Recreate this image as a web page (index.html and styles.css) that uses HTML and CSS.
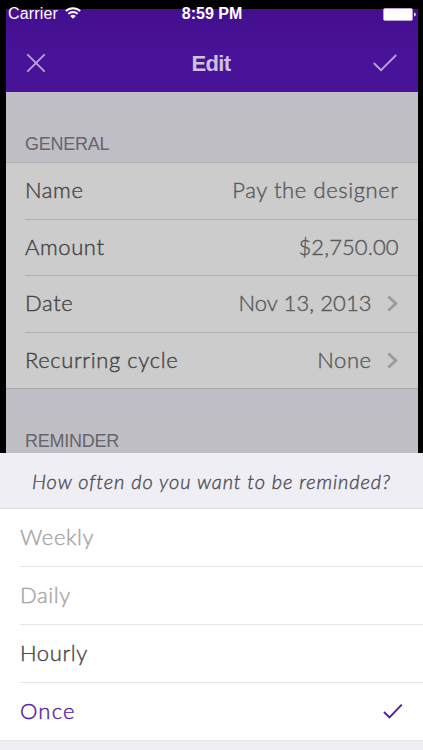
FILE: index.html
```
<!DOCTYPE html>
<html lang="en">
<head>
    <meta charset="UTF-8">
    <title>Edit</title>
    <link rel="stylesheet" href="styles.css">
</head>
<body>
    <div class="status">
        <div class="carrier">
            <span>Carrier</span>
            <svg class="wifi" width="16" height="12" viewBox="0 0 16 12">
                <path d="M0.8 4.2a10.2 10.2 0 0 1 14.4 0M3.3 6.9a6.7 6.7 0 0 1 9.4 0" fill="none" stroke="#fff" stroke-width="1.9"/>
                <path d="M8 11.8L5.2 9a4 4 0 0 1 5.6 0z" fill="#fff"/>
            </svg>
        </div>
        <div class="time">8:59 PM</div>
        <svg class="battery" width="33" height="13" viewBox="0 0 33 13">
            <rect x="0.5" y="0.5" width="29" height="12" rx="1.5" fill="#fff" stroke="#b7a1d8"/>
            <path d="M31 4.5q2 0.5 2 2t-2 2z" fill="#d9cdec"/>
        </svg>
    </div>

    <div class="screen">
        <div class="navbar">
            <svg width="20" height="20" viewBox="0 0 20 20">
                <path d="M1.3 1.3L18.7 18.7M18.7 1.3L1.3 18.7"/>
            </svg>
            <h1>Edit</h1>
            <svg width="24" height="18" viewBox="0 0 24 18">
                <path d="M0.8 9L8 16.2L23.2 1"/>
            </svg>
        </div>
        <h2 class="first"><span>GENERAL</span></h2>
        <div class="group">
            <div class="row"><span>Name</span><span class="value">Pay the designer</span></div>
            <div class="row"><span>Amount</span><span class="value number">$2,750.00</span></div>
            <div class="row">
                <span>Date</span><span class="value number">Nov 13, 2013</span>
                <svg class="arrow" width="11" height="17" viewBox="0 0 11 17"><path d="M1.3 1.5L8.8 8.5L1.3 15.5"/></svg>
            </div>
            <div class="row">
                <span>Recurring cycle</span><span class="value">None</span>
                <svg class="arrow" width="11" height="17" viewBox="0 0 11 17"><path d="M1.3 1.5L8.8 8.5L1.3 15.5"/></svg>
            </div>
        </div>
        <h2 class="second"><span>REMINDER</span></h2>
    </div>

    <div class="sheet">
        <div class="question"><span>How often do you want to be reminded?</span></div>
        <div class="option disabled"><span>Weekly</span></div>
        <div class="option disabled"><span>Daily</span></div>
        <div class="option"><span>Hourly</span></div>
        <div class="option selected">
            <span>Once</span>
            <svg width="20" height="16" viewBox="0 0 20 16"><path d="M1 9L6.5 14.4L18.8 1.6"/></svg>
        </div>
    </div>
</body>
</html>
```
FILE: styles.css
```
* {
    box-sizing: border-box;
}
body {
    margin: 0;
    width: 423px;
    height: 750px;
    padding-top: 9px;
    background: #000;
    font-family: Lato, sans-serif;
    font-weight: 300;
    overflow: hidden;
    position: relative;
}
span, h1 {
    white-space: nowrap;
}
/* status bar lies over the shrunken screen */
.status {
    position: absolute;
    top: 0;
    left: 0;
    width: 423px;
    height: 28px;
    padding: 0 7px 0 8px;
    display: grid;
    grid-template-columns: 1fr auto 1fr;
    align-items: center;
    color: #fff;
    font: 16px "Liberation Sans", sans-serif;
    z-index: 1;
}
.carrier {
    display: flex;
    align-items: center;
    gap: 7px;
    letter-spacing: 0.15px;
}
.wifi {
    margin-top: -2px;
}
.time {
    font-weight: bold;
}
.battery {
    justify-self: end;
}
.screen {
    width: 412px;
    height: 444px;
    margin-left: 5.5px;
    background: #bfbec4;
    overflow: hidden;
}
.navbar {
    height: 83px;
    padding: 25px 21px 0 20px;
    display: flex;
    align-items: center;
    justify-content: space-between;
    background: linear-gradient(#440e8f, #481399 60%);
}
.navbar svg {
    fill: none;
    stroke: #b8a4d8;
    stroke-width: 1.8;
}
h1 {
    margin: 2px 0 0 4px;
    font: bold 22px "Liberation Sans", sans-serif;
    letter-spacing: -0.6px;
    color: #cdc1df;
}
h2 {
    margin: 0;
    padding-left: 19.5px;
    display: flex;
    align-items: flex-end;
    font: 18px/22px "Liberation Sans", sans-serif;
    letter-spacing: -0.25px;
    color: #66656a;
}
.first {
    height: 70px;
    padding-bottom: 7px;
}
.second {
    height: 63px;
}
.group {
    background: #ccc;
    border-top: 1px solid #b0afb3;
    border-bottom: 1px solid #aaa9ad;
}
.row {
    height: 56.6px;
    margin-left: 19.5px;
    padding-right: 19.5px;
    display: flex;
    align-items: center;
    border-bottom: 1px solid #b0b0b2;
    font-size: 22px;
    letter-spacing: 0.6px;
    color: #444;
}
.row:last-child {
    height: 55px;
    border-bottom: 0;
}
.row span {
    padding-bottom: 2px;
}
/* between the light and the regular weight */
.row span, .question span, .option span {
    -webkit-text-stroke: 0.4px currentColor;
}
.row .value {
    margin-left: auto;
    margin-right: -0.7px;
    color: #5a5a5a;
}
.number {
    letter-spacing: 0.1px;
}
.arrow {
    margin-left: 16px;
    fill: none;
    stroke: #9b9b9f;
    stroke-width: 2.8;
}
.sheet {
    height: 297px;
    background: #efeef5;
}
.question {
    height: 56px;
    display: flex;
    align-items: center;
    justify-content: center;
    border-bottom: 1px solid #e0dfe4;
    font-size: 20px;
    font-style: italic;
    letter-spacing: 0.9px;
    color: #504f55;
}
.option {
    height: 58px;
    padding: 0 20px;
    display: flex;
    align-items: center;
    justify-content: space-between;
    background: linear-gradient(#e6e6e8, #e6e6e8) 20px 100% / 100% 1px no-repeat #fff;
    font-size: 22px;
    letter-spacing: 0.6px;
    color: #484848;
}
.option span {
    padding-bottom: 4px;
}
.disabled {
    color: #a5a5a5;
}
.selected {
    background-position: 0 100%;
    letter-spacing: 1.2px;
    color: #5420a8;
}
.selected svg {
    margin-top: -2px;
    fill: none;
    stroke: #5420a8;
    stroke-width: 2;
}
```
